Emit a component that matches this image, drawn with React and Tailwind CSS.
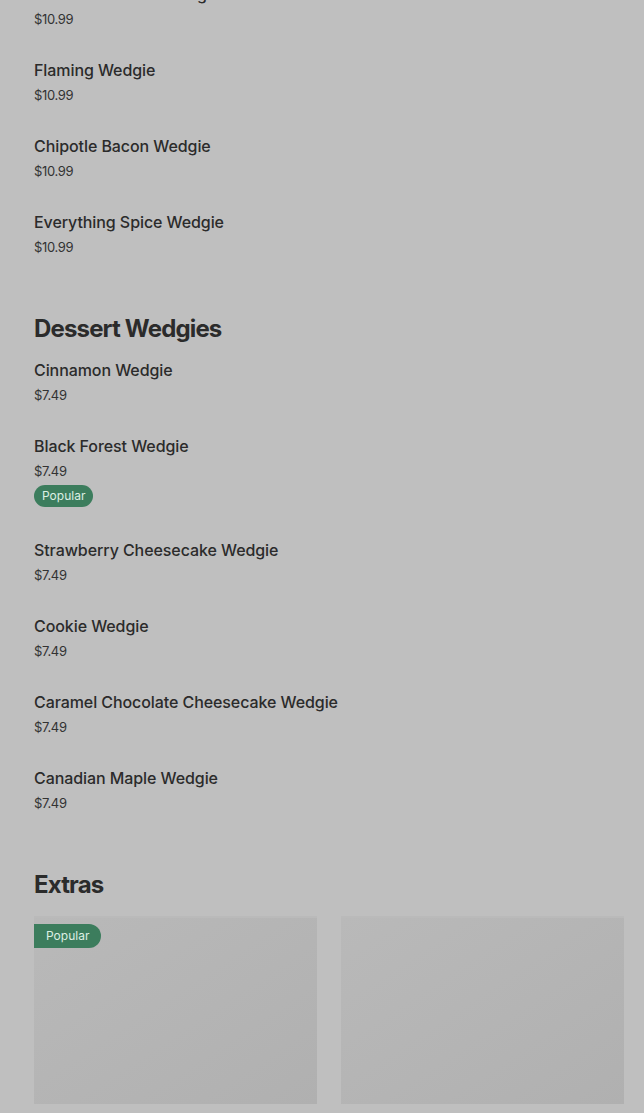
const font = { fontFamily: "Inter, 'Noto Sans', sans-serif" };

const savoury = [
  { name: "Garlic Parmesan Wedgie", price: "$10.99" },
  { name: "Flaming Wedgie", price: "$10.99" },
  { name: "Chipotle Bacon Wedgie", price: "$10.99" },
  { name: "Everything Spice Wedgie", price: "$10.99" },
];

const desserts = [
  { name: "Cinnamon Wedgie", price: "$7.49" },
  { name: "Black Forest Wedgie", price: "$7.49", popular: true },
  { name: "Strawberry Cheesecake Wedgie", price: "$7.49" },
  { name: "Cookie Wedgie", price: "$7.49" },
  { name: "Caramel Chocolate Cheesecake Wedgie", price: "$7.49" },
  { name: "Canadian Maple Wedgie", price: "$7.49" },
];

const extras = [
  { name: "Pepperoni Pop Bites (24)", popular: true },
  { name: "Potato Wedges" },
];

function MenuItem({ item }) {
  return (
    <div className="pb-[29px]">
      <div className="text-[16px] leading-[24px] font-[450] tracking-[-0.005em] text-[#2b2b2b]">
        {item.name}
      </div>
      <div className="mt-[3px] text-[13px] leading-[20px] tracking-tight text-[#333333]">
        {item.price}
      </div>
      {item.popular && (
        <div className="mt-[4px] mb-[2px] inline-flex h-[22px] items-center rounded-full bg-[#3c7d5d] px-2 text-[12px] text-[#dcefe3]">
          Popular
        </div>
      )}
    </div>
  );
}

function SectionTitle({ children }) {
  return (
    <h2 className="mt-[27px] mb-[13px] text-[24px] leading-[32px] font-bold tracking-[-0.035em] text-[#2b2b2b]">
      {children}
    </h2>
  );
}

function ExtraCard({ item }) {
  return (
    <div>
      <div className="relative h-[188px] bg-gradient-to-br from-[#b9b9b9] to-[#b0b0b0] border-t-2 border-[#bababa]">
        {item.popular && (
          <div className="absolute left-0 top-[6px] flex h-[24px] items-center rounded-r-full bg-[#3c7d5d] pl-3 pr-3 text-[12px] text-[#dcefe3]">
            Popular
          </div>
        )}
      </div>
      <div className="mt-[4px] text-[16px] leading-[24px] font-[450] text-[#2b2b2b]">
        {item.name}
      </div>
    </div>
  );
}

export default function App() {
  return (
    <div className="h-[1113px] overflow-hidden bg-[#bfbfbf]" style={font}>
      <div className="-mt-[18px] pl-[34px] pr-[20px]">
        {savoury.map((item) => (
          <MenuItem key={item.name} item={item} />
        ))}

        <SectionTitle>Dessert Wedgies</SectionTitle>
        {desserts.map((item) => (
          <MenuItem key={item.name} item={item} />
        ))}

        <SectionTitle>Extras</SectionTitle>
        <div className="mt-[15px] grid grid-cols-2 gap-6">
          {extras.map((item) => (
            <ExtraCard key={item.name} item={item} />
          ))}
        </div>
      </div>
    </div>
  );
}
